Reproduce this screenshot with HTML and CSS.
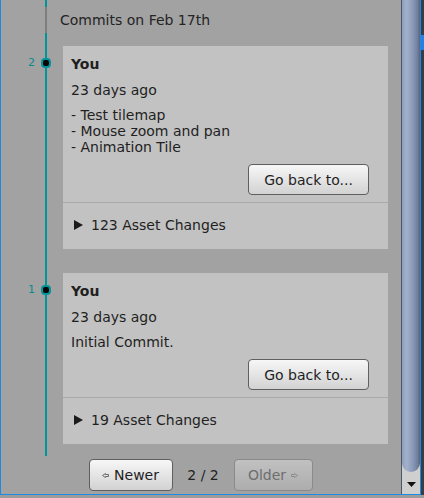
FILE: index.html
```html
<!DOCTYPE html>
<html>
<head>
<meta charset="utf-8">
<link rel="stylesheet" href="styles.css">
</head>
<body>
<div class="screen">
  <div class="window">
    <div class="content">
      <div class="rail rail-top"></div>
      <div class="rail rail-muted day">Commits on Feb 17th</div>
      <div class="rail rail-lead"></div>

      <div class="rail entry entry-gap">
        <div class="gutter">
          <div class="marker"><span class="num">2</span><span class="dot"></span></div>
        </div>
        <div class="card">
          <div class="card-main">
            <div class="author">You</div>
            <div class="date">23 days ago</div>
            <div class="msg">- Test tilemap<br>- Mouse zoom and pan<br>- Animation Tile</div>
            <div class="actions"><button class="btn btn-back">Go back to...</button></div>
          </div>
          <div class="changes">
            <svg class="tri" width="9" height="10" viewBox="0 0 9 10"><path d="M0 0 L9 5 L0 10 Z" fill="#1a1a1a"/></svg>
            <span>123 Asset Changes</span>
          </div>
        </div>
      </div>

      <div class="rail entry entry-tail">
        <div class="gutter">
          <div class="marker"><span class="num">1</span><span class="dot"></span></div>
        </div>
        <div class="card">
          <div class="card-main">
            <div class="author">You</div>
            <div class="date">23 days ago</div>
            <div class="msg">Initial Commit.</div>
            <div class="actions"><button class="btn btn-back">Go back to...</button></div>
          </div>
          <div class="changes">
            <svg class="tri" width="9" height="10" viewBox="0 0 9 10"><path d="M0 0 L9 5 L0 10 Z" fill="#1a1a1a"/></svg>
            <span>19 Asset Changes</span>
          </div>
        </div>
      </div>

      <div class="pager">
        <button class="btn btn-newer">
          <svg width="7" height="5" viewBox="0 0 7 5"><path d="M0.5 2.5 L3.5 0.5 L3.5 1.5 L6.5 1.5 L6.5 3.5 L3.5 3.5 L3.5 4.5 Z" fill="none" stroke="#6a6a6a" stroke-width="1"/></svg>
          <span>Newer</span>
        </button>
        <span class="page">2 / 2</span>
        <button class="btn btn-older" disabled>
          <span>Older</span>
          <svg width="7" height="5" viewBox="0 0 7 5"><path d="M6.5 2.5 L3.5 0.5 L3.5 1.5 L0.5 1.5 L0.5 3.5 L3.5 3.5 L3.5 4.5 Z" fill="none" stroke="#8c8c8c" stroke-width="1"/></svg>
        </button>
      </div>
    </div>
    <div class="scrollbar">
      <div class="thumb"></div>
      <div class="arrow">
        <svg width="9" height="5" viewBox="0 0 9 5"><path d="M0 0 L9 0 L4.5 5 Z" fill="#111"/></svg>
      </div>
    </div>
  </div>
  <div class="side"><div class="side-mark"></div></div>
</div>
<div class="dock"></div>
</body>
</html>
```
FILE: styles.css
```css
* { box-sizing: border-box; }

html, body {
  margin: 0;
  padding: 0;
}

body {
  width: 424px;
  height: 498px;
  overflow: hidden;
  background: #3a3d44;
  font-family: "DejaVu Sans", Verdana, sans-serif;
  font-size: 14px;
  color: #1f1f1f;
}

.screen {
  display: flex;
  height: 495px;
}

.window {
  width: 421px;
  height: 495px;
  display: flex;
  background: #a2a2a2;
  border-left: 1px solid #1d8be4;
  border-right: 1px solid #1d8be4;
  border-bottom: 1px solid #1d8be4;
}

.content {
  width: 400px;
  display: flex;
  flex-direction: column;
  overflow: hidden;
}

.rail {
  background-image: linear-gradient(#00959b, #00959b);
  background-repeat: no-repeat;
  background-size: 2px 100%;
  background-position: 44px 0;
}

.rail-muted {
  background-image: linear-gradient(#7e7e7e, #7e7e7e);
}

.rail-top { height: 7px; }
.rail-lead { height: 13px; }

.day {
  height: 26px;
  line-height: 27px;
  padding-left: 59px;
  color: #242424;
}

.entry {
  display: flex;
}

.entry-gap { padding-bottom: 24px; }
.entry-tail { padding-bottom: 12px; }

.gutter {
  width: 62px;
  flex-shrink: 0;
}

.marker {
  display: flex;
  align-items: center;
  height: 10px;
  margin-top: 12px;
}

.num {
  width: 34px;
  text-align: right;
  font-size: 11px;
  line-height: 10px;
  color: #0a8a90;
}

.dot {
  width: 10px;
  height: 10px;
  margin-left: 6px;
  border: 2px solid #00959b;
  border-radius: 4px;
  background: #050505;
}

.card {
  width: 325px;
  background: #c2c2c2;
}

.card-main {
  padding: 9px 19px 7px 8px;
}

.author {
  font-weight: bold;
  line-height: 18px;
}

.date {
  margin-top: 8px;
  line-height: 18px;
}

.msg {
  margin-top: 8px;
  line-height: 16px;
}

.actions {
  margin-top: 9px;
  display: flex;
  justify-content: flex-end;
}

.btn {
  font-family: "DejaVu Sans", Verdana, sans-serif;
  font-size: 14px;
  color: #1e1e1e;
  border: 1px solid #5f5f5f;
  border-radius: 4px;
  background: linear-gradient(#f7f7f7, #d2d2d2);
  padding: 0;
  display: flex;
  align-items: center;
  justify-content: center;
  gap: 5px;
}

.btn-back {
  width: 121px;
  height: 31px;
}

.changes {
  border-top: 1px solid #a9a9a9;
  padding: 13px 8px 15px 11px;
  line-height: 18px;
  display: flex;
  align-items: center;
  gap: 8px;
}

.pager {
  margin-top: 3px;
  height: 32px;
  display: flex;
  justify-content: center;
  align-items: center;
  gap: 14px;
  padding-right: 1px;
}

.btn-newer {
  width: 84px;
  height: 32px;
}

.btn-older {
  width: 79px;
  height: 32px;
  color: #6e6e6e;
  border-color: #8a8a8a;
  background: linear-gradient(#c1c1c1, #adadad);
}

.page {
  color: #222;
  width: 33px;
  text-align: center;
}

.scrollbar {
  width: 19px;
  display: flex;
  flex-direction: column;
  background: #cfcfcf;
  border-left: 1px solid #4e5566;
}

.thumb {
  flex: 1;
  border-radius: 0 0 9px 9px;
  background: linear-gradient(90deg, #8e9dba 0%, #a2b1cb 25%, #8d9dbb 55%, #72819f 85%, #56637f 100%);
}

.arrow {
  height: 22px;
  display: flex;
  align-items: center;
  justify-content: center;
  padding-top: 2px;
}

.side {
  width: 3px;
  height: 495px;
}

.side-mark {
  margin-top: 35px;
  height: 15px;
  background: #2b7fe0;
}

.dock {
  height: 3px;
  background: #9c9c9c;
}
```
